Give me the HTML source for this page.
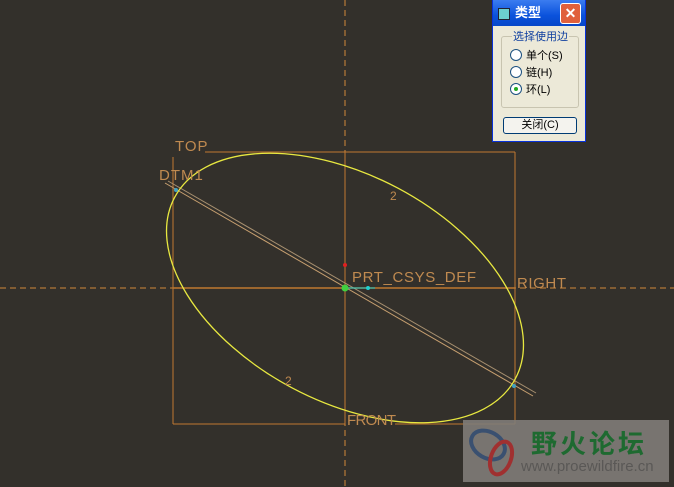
<!DOCTYPE html><html><head><meta charset="utf-8"><style>
body{margin:0;width:674px;height:487px;overflow:hidden;background:#33302b;position:relative;font-family:"Liberation Sans","Noto Sans CJK SC",sans-serif}
svg{position:absolute;left:0;top:0}
.dlg{position:absolute;left:492px;top:0;width:94px;height:142px;background:#ece9d8;border:1px solid #0831d9;box-sizing:border-box;border-top:none}
.tb{height:26px;background:linear-gradient(#3b7cf0,#0a52dc 60%,#0848c8);color:#fff;font-weight:bold;font-size:13px;line-height:26px;position:relative}
.tb .ic{position:absolute;left:5px;top:8px;width:10px;height:10px;background:#6cd0d0;border:1px solid #223}
.tb span{position:absolute;left:22px}
.tb .x{position:absolute;right:4px;top:3px;width:19px;height:19px;background:#e0603c;border:1px solid #fff;border-radius:3px;color:#fff;text-align:center;line-height:18px;font-size:14px}
.grp{position:absolute;left:8px;top:36px;width:76px;height:70px;border:1px solid #c8c4b0;border-radius:3px}
.grp .lg{position:absolute;left:10px;top:-9px;background:#ece9d8;font-size:11px;color:#1040a0;padding:0 1px}
.r{position:absolute;left:8px;font-size:11px;color:#000}
.r i{display:inline-block;width:10px;height:10px;border:1px solid #1c5180;border-radius:50%;background:#fff;vertical-align:-2px;margin-right:4px;position:relative}
.btn{position:absolute;left:10px;top:117px;width:72px;height:15px;border:1px solid #003c74;border-radius:3px;background:#f4f3ee;font-size:11px;text-align:center;line-height:15px}
.wm{position:absolute;left:463px;top:420px;width:206px;height:62px;background:rgba(128,124,120,.9);overflow:hidden}
</style></head><body>
<svg width="674" height="487">
<g stroke="#c07830" fill="none" stroke-width="1">
<line x1="345" y1="0" x2="345" y2="487" stroke-dasharray="6,4" stroke="#d08838"/>
<line x1="0" y1="288" x2="674" y2="288" stroke-dasharray="6,4" stroke="#d08838"/>
<line x1="205" y1="152" x2="515" y2="152"/>
<line x1="515" y1="152" x2="515" y2="424"/>
<line x1="173" y1="157" x2="173" y2="424"/>
<line x1="173" y1="424" x2="345" y2="424"/>
<line x1="395" y1="424" x2="515" y2="424"/>
<line x1="345" y1="152" x2="345" y2="424"/>
<line x1="173" y1="288" x2="515" y2="288" stroke-width="1.5"/>
<line x1="165" y1="183" x2="533" y2="396" stroke="#c8a070"/>
<line x1="168" y1="181" x2="536" y2="393" stroke="#a89070"/>
</g>
<ellipse cx="345" cy="288" rx="193" ry="113" transform="rotate(28 345 288)" fill="none" stroke="#e8e840" stroke-width="1.3"/>
<line x1="345" y1="288" x2="375" y2="288" stroke="#20d0d0"/>
<circle cx="345" cy="288" r="3.5" fill="#40d040"/>
<circle cx="345" cy="265" r="2" fill="#e02020"/>
<circle cx="368" cy="288" r="2" fill="#20d0d0"/>
<circle cx="176" cy="190" r="2" fill="#40a0c0"/>
<circle cx="514" cy="386" r="2" fill="#40a0c0"/>
<g fill="#c08a50" font-family="Liberation Sans,sans-serif" font-size="15" letter-spacing="1">
<text x="175" y="151">TOP</text><text x="159" y="180">DTM1</text>
<text x="352" y="282" textLength="125">PRT_CSYS_DEF</text><text x="517" y="288" textLength="50">RIGHT</text>
<text x="347" y="425" textLength="50">FRONT</text>
<text x="390" y="200" font-size="12">2</text><text x="285" y="385" font-size="12">2</text>
</g>
</svg>
<div class="dlg"><div class="tb"><div class="ic"></div><span>类型</span><div class="x">✕</div></div>
<div class="grp"><div class="lg">选择使用边</div>
<div class="r" style="top:10px"><i></i>单个(S)</div>
<div class="r" style="top:27px"><i></i>链(H)</div>
<div class="r" style="top:44px"><i><b style="position:absolute;left:3px;top:3px;width:4px;height:4px;border-radius:50%;background:#2a2"></b></i>环(L)</div></div>
<div class="btn">关闭(C)</div></div>
<div class="wm">
<svg width="60" height="62"><ellipse cx="25" cy="25" rx="18" ry="13" fill="none" stroke="#3a5070" stroke-width="4" transform="rotate(30 25 25)"/><ellipse cx="38" cy="38" rx="10" ry="17" fill="none" stroke="#a03030" stroke-width="4" transform="rotate(20 38 38)"/></svg>
<div style="position:absolute;left:68px;top:4px;font-size:26px;font-weight:bold;color:#1e6a30;letter-spacing:3px">野火论坛</div>
<div style="position:absolute;left:58px;top:38px;font-size:15px;color:#5a5856">www.proewildfire.cn</div></div>
</body></html>
